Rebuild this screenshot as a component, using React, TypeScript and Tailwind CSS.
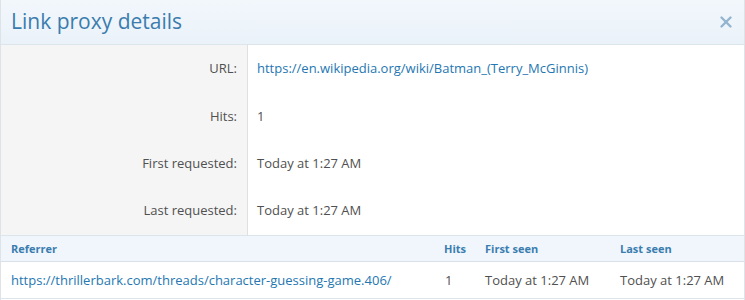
import React from "react";
import { X } from "lucide-react";

const rows = [
  { label: "URL:", value: "https://en.wikipedia.org/wiki/Batman_(Terry_McGinnis)", link: true, h: "h-[48px]" },
  { label: "Hits:", value: "1", h: "h-[47px]" },
  { label: "First requested:", value: "Today at 1:27 AM", h: "h-[47px]" },
  { label: "Last requested:", value: "Today at 1:27 AM", h: "h-[48px]" },
];

export default function App() {
  return (
    <div className="w-[745px] h-[300px] bg-white border-x border-[#dfe3e7] font-['Open_Sans',sans-serif] text-[#505050] overflow-hidden">
      <div className="h-[45px] flex items-center justify-between pl-[10px] pr-[9px] bg-gradient-to-b from-[#f2f7fc] to-[#eaf2f9] border-b border-[#dde5ec]">
        <h2 className="text-[21px] text-[#3a7cae]">Link proxy details</h2>
        <X className="w-[18px] h-[18px] text-[#93b5cf]" strokeWidth={3.2} />
      </div>
      <div>
        {rows.map((r) => (
          <div key={r.label} className={`flex ${r.h}`}>
            <div className="w-[247px] shrink-0 bg-[#f5f5f5] border-r border-[#e0e0e0] flex items-center justify-end pr-[10px] text-[13px] text-[#505050]">
              {r.label}
            </div>
            <div className={`flex items-center pl-[9px] text-[13px] ${r.link ? "text-[#2577b1]" : "text-[#505050]"}`}>
              {r.value}
            </div>
          </div>
        ))}
      </div>
      <div className="border-t border-[#dde5ec]">
        <div className="flex h-[26px] items-center pt-[1px] bg-[#f0f6fc] border-b border-[#d8e1e9] text-[11px] font-bold text-[#3a7db0]">
          <div className="w-[443px] pl-[10px]">Referrer</div>
          <div className="w-[41px]">Hits</div>
          <div className="w-[135px]">First seen</div>
          <div>Last seen</div>
        </div>
        <div className="flex h-[37px] items-center pt-[1px] text-[13px] border-b border-[#dde5ec]">
          <div className="w-[443px] pl-[10px] text-[#2577b1]">https://thrillerbark.com/threads/character-guessing-game.406/</div>
          <div className="w-[41px] pl-[1px]">1</div>
          <div className="w-[135px]">Today at 1:27 AM</div>
          <div>Today at 1:27 AM</div>
        </div>
      </div>
    </div>
  );
}
